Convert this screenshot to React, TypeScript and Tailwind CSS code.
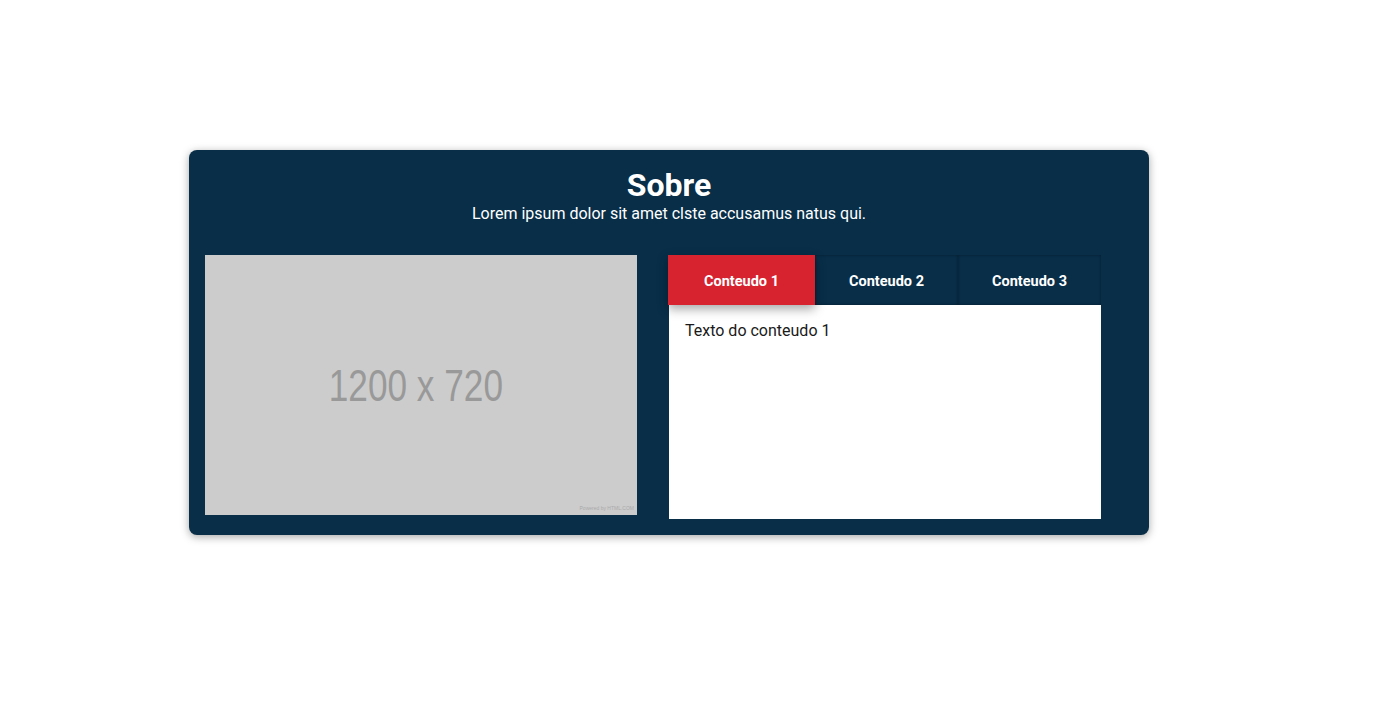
export default function App() {
  return (
    <div className="min-h-screen bg-white pt-[150px] font-['Roboto',sans-serif]">
      {/* Sobre card */}
      <section className="ml-[189px] w-[960px] rounded-lg bg-[#082e48] px-4 pb-4 pt-[17px] shadow-[0_2px_8px_rgba(0,0,0,0.35)]">
        <div className="text-center text-white">
          <h2 className="text-[32px] font-bold leading-[36px]">Sobre</h2>
          <p className="mt-px text-base leading-5">Lorem ipsum dolor sit amet clste accusamus natus qui.</p>
        </div>

        <div className="mt-[31px] flex items-start gap-8">
          {/* placeholder image */}
          <div className="relative flex h-[260px] w-[432px] items-center justify-center bg-[#cccccc]">
            <span className="-ml-[10px] mt-[2px] whitespace-nowrap font-['Liberation_Sans',sans-serif] text-[44px] text-[#999999] [transform:scaleX(0.8)]">
              1200 x 720
            </span>
            <span className="absolute bottom-[3px] right-[3px] font-['Liberation_Sans',sans-serif] text-[5px] text-[#aaaaaa]">
              Powered by HTML.COM
            </span>
          </div>

          {/* tabs */}
          <div className="w-[432px]">
            <div className="flex h-[50px]">
              <button className="relative z-10 -ml-px w-[147px] bg-[#d7222f] pt-[4px] text-[14.5px] font-bold text-white shadow-[0_4px_10px_rgba(0,0,0,0.35)]">
                Conteudo 1
              </button>
              <button className="w-[143px] bg-[#082e48] pt-[4px] text-[14.5px] font-bold text-white shadow-[inset_0_0_3px_rgba(0,0,0,0.4)]">
                Conteudo 2
              </button>
              <button className="w-[143px] bg-[#082e48] pt-[4px] text-[14.5px] font-bold text-white shadow-[inset_0_0_3px_rgba(0,0,0,0.4)]">
                Conteudo 3
              </button>
            </div>
            <div className="h-[214px] bg-white px-4 pt-[17px] text-base leading-[18px] text-[#1a1a1a]">
              Texto do conteudo 1
            </div>
          </div>
        </div>
      </section>
    </div>
  );
}
